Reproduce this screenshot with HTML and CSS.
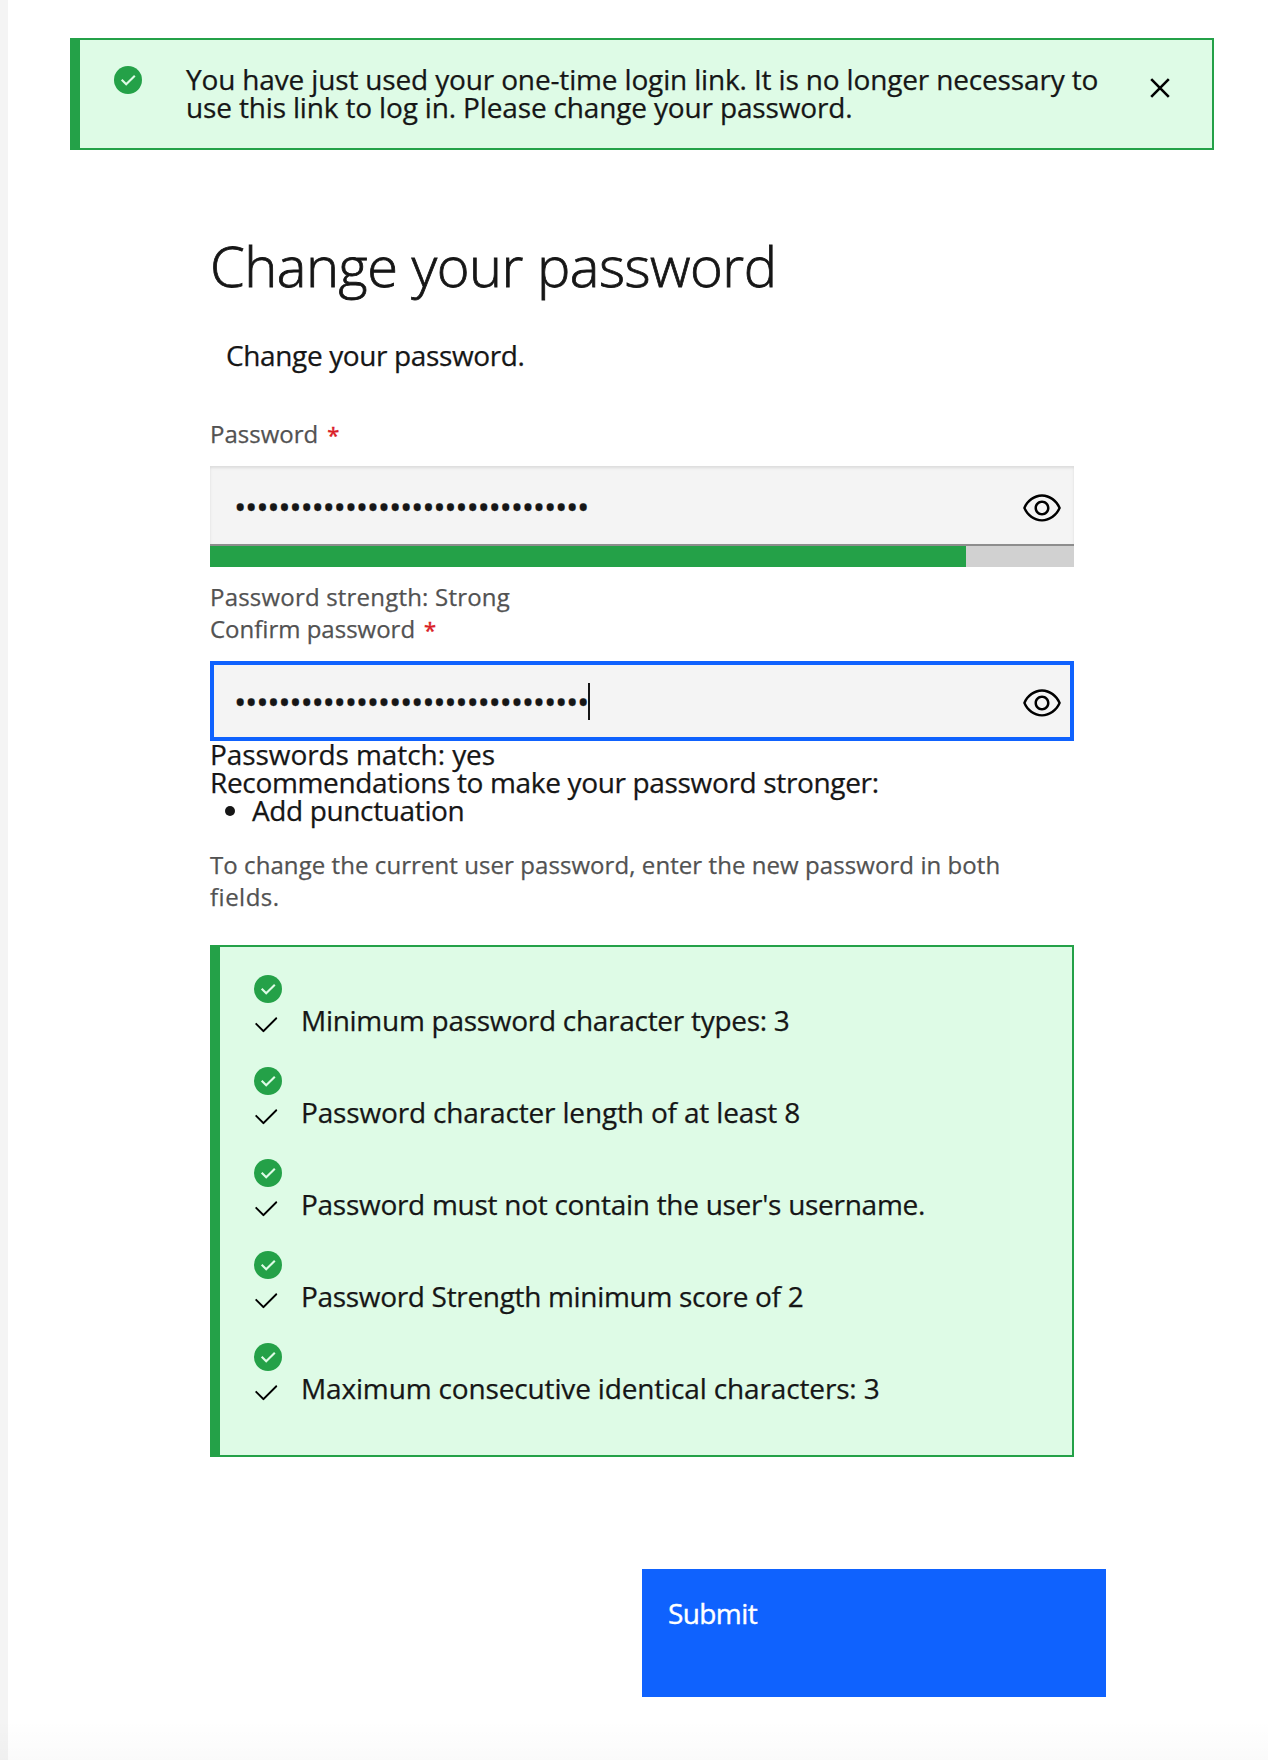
FILE: index.html
```
<!DOCTYPE html>
<html lang="en">
<head>
<meta charset="utf-8">
<title>Change your password</title>
<link rel="stylesheet" href="styles.css">
</head>
<body>
<svg class="sprite" aria-hidden="true">
  <symbol id="success" viewBox="0 0 28 28"><circle cx="14" cy="14" r="14" fill="#24a148"/><path d="M7.7 13.8l4.5 4.5 8.6-8.5" fill="none" stroke="#defbe6" stroke-width="2.1"/></symbol>
  <symbol id="check" viewBox="4 7.5 24 16.5"><path d="M13 24l-9-9 1.414-1.414L13 21.171 26.586 7.586 28 9z"/></symbol>
  <symbol id="view" viewBox="0 0 16 16"><path d="M15.5 7.8C14.3 4.7 11.3 2.6 8 2.5 4.7 2.6 1.7 4.7.5 7.8c0 .1 0 .2 0 .3 1.2 3.1 4.1 5.2 7.5 5.3 3.3-.1 6.3-2.2 7.5-5.3 0-.1 0-.2 0-.3zM8 12.5c-2.7 0-5.4-2-6.5-4.5 1-2.5 3.8-4.5 6.5-4.5s5.4 2 6.5 4.5c-1.1 2.5-3.9 4.5-6.5 4.5z"/><path d="M8 5C6.3 5 5 6.3 5 8s1.3 3 3 3 3-1.3 3-3-1.3-3-3-3zm0 5c-1.1 0-2-.9-2-2s.9-2 2-2 2 .9 2 2-.9 2-2 2z"/></symbol>
</svg>
<main class="page">
  <div class="notice">
    <svg class="success"><use href="#success"/></svg>
    <p class="notice-text">You have just used your one-time login link. It is no longer necessary to<br>use this link to log in. Please change your password.</p>
    <svg class="close" viewBox="0 0 20 20"><path d="M1.2 1.2l17.6 17.6M18.8 1.2L1.2 18.8"/></svg>
  </div>
  <form class="form">
    <h1 class="title">Change your password</h1>
    <p class="intro">Change your password.</p>
    <label class="label">Password<span class="star">*</span></label>
    <div class="field"><span class="dots">••••••••••••••••••••••••••••••••</span><svg class="eye"><use href="#view"/></svg></div>
    <div class="meter"><div class="meter-value" style="width: 87.5%"></div></div>
    <p class="strength">Password strength: Strong</p>
    <label class="label">Confirm password<span class="star">*</span></label>
    <div class="field focused"><span class="dots">••••••••••••••••••••••••••••••••</span><span class="caret"></span><svg class="eye"><use href="#view"/></svg></div>
    <div class="match">Passwords match: yes</div>
    <div class="recommend">Recommendations to make your password stronger:</div>
    <ul class="tips"><li>Add punctuation</li></ul>
    <p class="description">To change the current user password, enter the new password in both<br><span class="last-word">fields.</span></p>
    <div class="rules">
      <div class="rule"><svg class="success"><use href="#success"/></svg><div class="rule-row"><svg class="check"><use href="#check"/></svg><span>Minimum password character types: 3</span></div></div>
      <div class="rule rule-length"><svg class="success"><use href="#success"/></svg><div class="rule-row"><svg class="check"><use href="#check"/></svg><span>Password character length of at least 8</span></div></div>
      <div class="rule"><svg class="success"><use href="#success"/></svg><div class="rule-row"><svg class="check"><use href="#check"/></svg><span>Password must not contain the user's username.</span></div></div>
      <div class="rule rule-score"><svg class="success"><use href="#success"/></svg><div class="rule-row"><svg class="check"><use href="#check"/></svg><span>Password Strength minimum score of 2</span></div></div>
      <div class="rule rule-repeat"><svg class="success"><use href="#success"/></svg><div class="rule-row"><svg class="check"><use href="#check"/></svg><span>Maximum consecutive identical characters: 3</span></div></div>
    </div>
    <button class="submit" type="button">Submit</button>
  </form>
</main>
</body>
</html>
```
FILE: styles.css
```
* { box-sizing: border-box; margin: 0; padding: 0; }
body {
  height: 1760px;
  overflow: hidden;
  background: #fff;
  color: #161616;
  font: 28px/28px "Open Sans", "Noto Sans", sans-serif;
  white-space: nowrap;
  -webkit-text-stroke: .25px;
}
.sprite { display: none; }
.page {
  height: 1760px;
  padding: 38px 54px 0 62px;
  border-left: 8px solid #f4f4f4;
}
.page::after {
  content: "";
  position: absolute;
  inset: 1720px 0 auto;
  height: 40px;
  background: linear-gradient(rgba(0, 0, 0, 0), rgba(0, 0, 0, .018));
}
.success { display: block; width: 28px; height: 28px; }
.notice, .rules {
  background: #defbe6;
  border: 2px solid #24a148;
  border-left-width: 10px;
}
.notice { display: flex; height: 112px; padding-left: 34px; }
.notice .success { margin-top: 26px; }
.notice-text { margin: 25px 0 0 44px; flex: 1; letter-spacing: -.155px; }
.close {
  width: 20px; height: 20px; margin: 38px 42px 0 0;
  fill: none; stroke: #000; stroke-width: 2.6;
}
.form { width: 864px; margin: 83px 0 0 140px; }
.title {
  font-size: 56px; line-height: 64px; font-weight: 300;
  letter-spacing: -.5px;
  -webkit-text-stroke: .8px;
}
.intro { margin: 44px 0 49px 16px; letter-spacing: -.37px; }
.label, .strength, .description { display: block; color: #525252; font-size: 24px; line-height: 32px; }
.star { margin-left: 9px; color: #da1e28; font-size: 22px; -webkit-text-stroke: .5px; }
.field {
  display: flex;
  align-items: center;
  height: 80px;
  margin-top: 16px;
  padding: 5px 12px 0 24px;
  background: #f4f4f4;
  border-bottom: 2px solid #8d8d8d;
  box-shadow: inset 0 2px 3px rgba(0, 0, 0, .1);
}
.focused { border: 4px solid #0f62fe; box-shadow: none; padding: 4px 8px 0 20px; }
.dots { margin-top: -2px; font-size: 33px; letter-spacing: -1.34px; }
.eye { width: 40px; height: 40px; margin-left: auto; }
.caret { width: 2px; height: 37px; margin: -4px 0 0; background: #161616; }
.meter { height: 21px; background: #d1d1d1; }
.meter-value { height: 100%; background: #24a148; }
.strength { margin-top: 14px; letter-spacing: .2px; }
.match { margin-top: -1px; letter-spacing: -.08px; }
.recommend { letter-spacing: -.34px; }
.tips { padding-left: 42px; letter-spacing: -.37px; }
.description { margin: 25px 0 32px; letter-spacing: .07px; }
.last-word { letter-spacing: .5px; }
.rules { height: 512px; padding: 28px 0 0 34px; }
.rule { height: 92px; letter-spacing: -.28px; }
.rule-length { letter-spacing: -.16px; }
.rule-score { letter-spacing: -.32px; }
.rule-repeat { letter-spacing: -.15px; }
.rule-row { display: flex; margin-top: 3px; }
.check { width: 22.5px; height: 15.5px; margin: 11px 23.5px 0 1px; }
.submit {
  display: flex; align-items: flex-start;
  width: 464px; height: 128px; margin: 112px 0 0 432px;
  padding: 30px 0 0 26px; border: 0;
  background: #0f62fe; color: #fff;
  font: inherit; text-align: left; letter-spacing: -.6px;
  -webkit-text-stroke: .4px;
}
```
